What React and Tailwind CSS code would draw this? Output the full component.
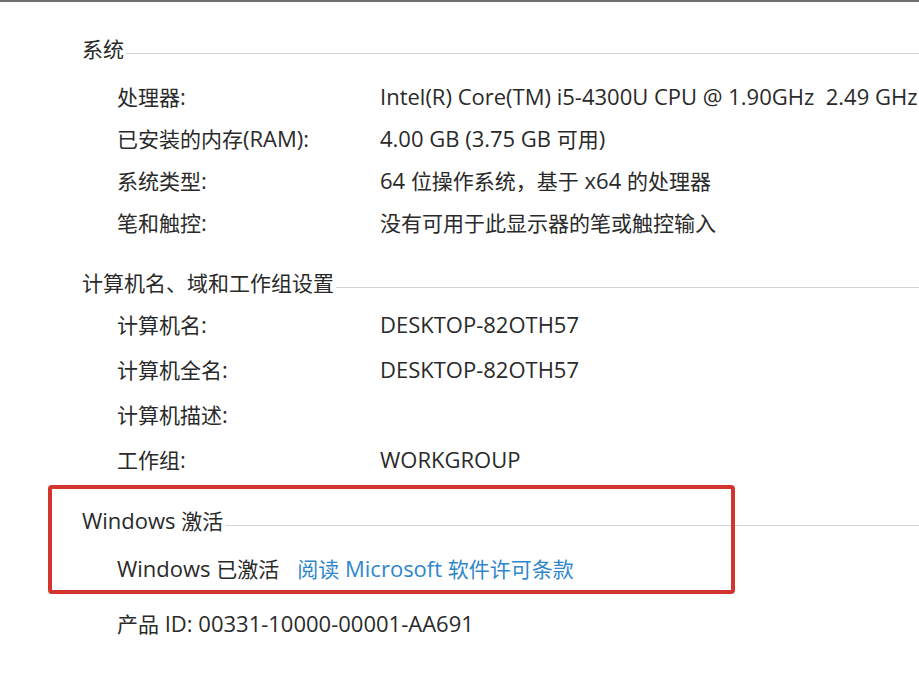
import React from "react";

const latin = { fontFamily: '"Open Sans", "Noto Sans CJK SC", sans-serif' };
const cjk = { fontFamily: '"Noto Sans CJK SC", sans-serif' };

function T({ children }) {
  const parts = String(children).split(/([\u3000-\u303f\u4e00-\u9fff\uff00-\uffef]+)/);
  return (
    <>
      {parts.map((p, i) =>
        i % 2 === 1 ? (
          <span key={i} className="text-[21px]" style={cjk}>
            {p}
          </span>
        ) : (
          <span key={i}>{p}</span>
        )
      )}
    </>
  );
}

function Header({ children }) {
  return (
    <div className="flex h-[30px] items-center pl-[82px]">
      <span className="whitespace-pre">
        <T>{children}</T>
      </span>
      <div className="mt-[10px] ml-[2px] h-px flex-1 bg-[#d4d4d4]" />
    </div>
  );
}

function Row({ label, value, h = "h-[42px]" }) {
  return (
    <div className={`flex ${h} items-center pl-[117px] whitespace-pre`}>
      <span className="w-[263px] shrink-0">
        <T>{label}</T>
      </span>
      <span>
        <T>{value}</T>
      </span>
    </div>
  );
}

export default function App() {
  return (
    <div
      className="h-[676px] w-[919px] overflow-hidden bg-white text-[22px] leading-[30px] text-[#2a2a2a]"
      style={latin}
    >
      <div className="h-[2px] bg-[#6e6e6e]" />
      <div className="mt-[31px]">
        <Header>系统</Header>
      </div>
      <div className="mt-[12px]">
        <Row label="处理器:" value="Intel(R) Core(TM) i5-4300U CPU @ 1.90GHz  2.49 GHz" />
        <Row label="已安装的内存(RAM):" value="4.00 GB (3.75 GB 可用)" />
        <Row label="系统类型:" value="64 位操作系统，基于 x64 的处理器" />
        <Row label="笔和触控:" value="没有可用于此显示器的笔或触控输入" />
      </div>
      <div className="mt-[24px]">
        <Header>计算机名、域和工作组设置</Header>
      </div>
      <div className="mt-[4px]">
        <Row h="h-[45px]" label="计算机名:" value="DESKTOP-82OTH57" />
        <Row h="h-[45px]" label="计算机全名:" value="DESKTOP-82OTH57" />
        <Row h="h-[45px]" label="计算机描述:" value="" />
        <Row h="h-[45px]" label="工作组:" value="WORKGROUP" />
      </div>
      <div className="relative pt-[24px]">
        <Header>Windows 激活</Header>
        <div className="mt-[12px] flex h-[42px] items-center pl-[117px] whitespace-pre">
          <span>
            <T>Windows 已激活</T>
          </span>
          <span className="ml-[18px] text-[#2f87cc]">
            <T>阅读 Microsoft 软件许可条款</T>
          </span>
        </div>
        <div className="pointer-events-none absolute left-[48px] top-[4px] h-[109px] w-[687px] rounded-[4px] border-4 border-[#d3342d]" />
      </div>
      <div className="mt-[13px] flex h-[42px] items-center pl-[117px] whitespace-pre">
        <span>
          <T>产品 ID: 00331-10000-00001-AA691</T>
        </span>
      </div>
    </div>
  );
}
